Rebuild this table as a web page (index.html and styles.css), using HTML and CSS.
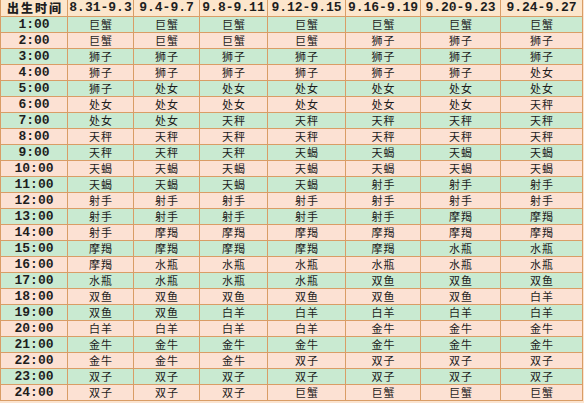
FILE: index.html
```html
<!DOCTYPE html>
<html lang="zh">
<head>
<meta charset="utf-8">
<title>出生时间星座对照表</title>
<link rel="stylesheet" href="styles.css">
</head>
<body>
<table class="chart">
<colgroup>
<col class="c0"><col class="c1"><col class="c2"><col class="c3"><col class="c4"><col class="c5"><col class="c6"><col class="c7">
</colgroup>
<thead>
<tr class="head"><th class="first lbl">出生时间</th><th>8.31-9.3</th><th>9.4-9.7</th><th>9.8-9.11</th><th>9.12-9.15</th><th>9.16-9.19</th><th>9.20-9.23</th><th>9.24-9.27</th></tr>
</thead>
<tbody>
<tr class="g"><th class="first">1:00</th><td>巨蟹</td><td>巨蟹</td><td>巨蟹</td><td>巨蟹</td><td>巨蟹</td><td>巨蟹</td><td>巨蟹</td></tr>
<tr class="p"><th class="first">2:00</th><td>巨蟹</td><td>巨蟹</td><td>巨蟹</td><td>巨蟹</td><td>狮子</td><td>狮子</td><td>狮子</td></tr>
<tr class="g"><th class="first">3:00</th><td>狮子</td><td>狮子</td><td>狮子</td><td>狮子</td><td>狮子</td><td>狮子</td><td>狮子</td></tr>
<tr class="p"><th class="first">4:00</th><td>狮子</td><td>狮子</td><td>狮子</td><td>狮子</td><td>狮子</td><td>狮子</td><td>处女</td></tr>
<tr class="g"><th class="first">5:00</th><td>狮子</td><td>处女</td><td>处女</td><td>处女</td><td>处女</td><td>处女</td><td>处女</td></tr>
<tr class="p"><th class="first">6:00</th><td>处女</td><td>处女</td><td>处女</td><td>处女</td><td>处女</td><td>处女</td><td>天秤</td></tr>
<tr class="g"><th class="first">7:00</th><td>处女</td><td>处女</td><td>天秤</td><td>天秤</td><td>天秤</td><td>天秤</td><td>天秤</td></tr>
<tr class="p"><th class="first">8:00</th><td>天秤</td><td>天秤</td><td>天秤</td><td>天秤</td><td>天秤</td><td>天秤</td><td>天秤</td></tr>
<tr class="g"><th class="first">9:00</th><td>天秤</td><td>天秤</td><td>天秤</td><td>天蝎</td><td>天蝎</td><td>天蝎</td><td>天蝎</td></tr>
<tr class="p"><th class="first">10:00</th><td>天蝎</td><td>天蝎</td><td>天蝎</td><td>天蝎</td><td>天蝎</td><td>天蝎</td><td>天蝎</td></tr>
<tr class="g"><th class="first">11:00</th><td>天蝎</td><td>天蝎</td><td>天蝎</td><td>天蝎</td><td>射手</td><td>射手</td><td>射手</td></tr>
<tr class="p"><th class="first">12:00</th><td>射手</td><td>射手</td><td>射手</td><td>射手</td><td>射手</td><td>射手</td><td>射手</td></tr>
<tr class="g"><th class="first">13:00</th><td>射手</td><td>射手</td><td>射手</td><td>射手</td><td>射手</td><td>摩羯</td><td>摩羯</td></tr>
<tr class="p"><th class="first">14:00</th><td>射手</td><td>摩羯</td><td>摩羯</td><td>摩羯</td><td>摩羯</td><td>摩羯</td><td>摩羯</td></tr>
<tr class="g"><th class="first">15:00</th><td>摩羯</td><td>摩羯</td><td>摩羯</td><td>摩羯</td><td>摩羯</td><td>水瓶</td><td>水瓶</td></tr>
<tr class="p"><th class="first">16:00</th><td>摩羯</td><td>水瓶</td><td>水瓶</td><td>水瓶</td><td>水瓶</td><td>水瓶</td><td>水瓶</td></tr>
<tr class="g"><th class="first">17:00</th><td>水瓶</td><td>水瓶</td><td>水瓶</td><td>水瓶</td><td>双鱼</td><td>双鱼</td><td>双鱼</td></tr>
<tr class="p"><th class="first">18:00</th><td>双鱼</td><td>双鱼</td><td>双鱼</td><td>双鱼</td><td>双鱼</td><td>双鱼</td><td>白羊</td></tr>
<tr class="g"><th class="first">19:00</th><td>双鱼</td><td>双鱼</td><td>白羊</td><td>白羊</td><td>白羊</td><td>白羊</td><td>白羊</td></tr>
<tr class="p"><th class="first">20:00</th><td>白羊</td><td>白羊</td><td>白羊</td><td>白羊</td><td>金牛</td><td>金牛</td><td>金牛</td></tr>
<tr class="g"><th class="first">21:00</th><td>金牛</td><td>金牛</td><td>金牛</td><td>金牛</td><td>金牛</td><td>金牛</td><td>金牛</td></tr>
<tr class="p"><th class="first">22:00</th><td>金牛</td><td>金牛</td><td>金牛</td><td>双子</td><td>双子</td><td>双子</td><td>双子</td></tr>
<tr class="g"><th class="first">23:00</th><td>双子</td><td>双子</td><td>双子</td><td>双子</td><td>双子</td><td>双子</td><td>双子</td></tr>
<tr class="p"><th class="first">24:00</th><td>双子</td><td>双子</td><td>双子</td><td>巨蟹</td><td>巨蟹</td><td>巨蟹</td><td>巨蟹</td></tr>
</tbody>
</table>
</body>
</html>
```

FILE: styles.css
```css
html, body {
  margin: 0;
  padding: 0;
  background: #fbe4d0;
}

.chart {
  border-collapse: separate;
  border-spacing: 0;
  table-layout: fixed;
  width: 583px;
}

.c0 { width: 68px; }
.c1 { width: 66px; }
.c2 { width: 66px; }
.c3 { width: 68px; }
.c4 { width: 78px; }
.c5 { width: 75px; }
.c6 { width: 80px; }
.c7 { width: 82px; }

.chart th,
.chart td {
  box-sizing: border-box;
  padding: 0;
  height: 16px;
  line-height: 15px;
  text-align: center;
  vertical-align: middle;
  border-right: 1px solid #d99d66;
  border-bottom: 1px solid #d99d66;
  white-space: nowrap;
}

.chart td {
  font-family: "Noto Sans CJK SC", "Noto Sans CJK JP", sans-serif;
  font-size: 11px;
  letter-spacing: 1px;
  text-indent: 1px;
  color: #1c1c1c;
}

.chart th {
  font-family: "Liberation Mono", "DejaVu Sans Mono", "Noto Sans CJK SC", monospace;
  font-size: 13px;
  font-weight: bold;
  color: #1e1e1e;
}

.chart .first {
  border-left: 1px solid #d99d66;
}

.head th {
  height: 17px;
  line-height: 16px;
  background: #fce6cc;
}

.head .lbl {
  font-family: "Noto Sans CJK SC", "Noto Sans CJK JP", sans-serif;
  font-size: 12px;
  font-weight: 900;
  letter-spacing: 2px;
  text-indent: 2px;
}

.g th,
.g td {
  background: #c9ead1;
}

.p th,
.p td {
  background: #fce1d3;
}
```
